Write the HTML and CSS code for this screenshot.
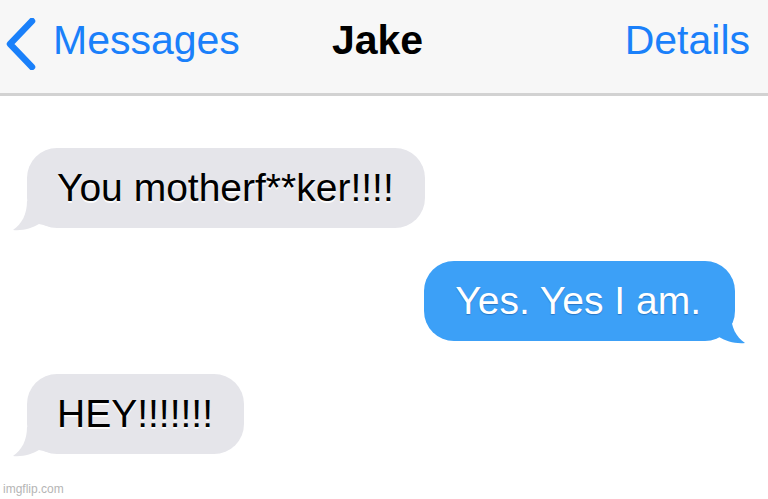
FILE: index.html
```html
<!DOCTYPE html>
<html lang="en">
<head>
  <meta charset="UTF-8">
  <meta name="viewport" content="width=device-width, initial-scale=1.0">
  <title>Jake</title>
  <link rel="stylesheet" href="styles.css">
</head>
<body>

  <!-- Top navigation bar -->
  <div class="nav-bar">
    <div class="nav-back">
      <svg class="chevron" width="30" height="52" viewBox="0 0 30 52">
        <path d="M26 3 L4 26 L26 49" fill="none" stroke="#1a80fa" stroke-width="6.5" stroke-linecap="round" stroke-linejoin="round"/>
      </svg>
      <span>Messages</span>
    </div>
    <div class="nav-title">Jake</div>
    <div class="nav-details">Details</div>
  </div>

  <!-- Conversation -->
  <div class="thread">
    <div class="bubble received">
      You motherf**ker!!!!
      <svg class="tail tail-left" width="40" height="30" viewBox="0 0 40 30">
        <path d="M15 0 C15 13 10 23 1 29 C11 30 20 27 27 23 L40 26 L40 0 Z" fill="#e5e5ea"/>
      </svg>
    </div>

    <div class="bubble sent">
      Yes. Yes I am.
      <svg class="tail tail-right" width="40" height="30" viewBox="0 0 40 30">
        <path d="M25 0 C25 13 30 23 39 29 C29 30 20 27 13 23 L0 26 L0 0 Z" fill="#3ca0f7"/>
      </svg>
    </div>

    <div class="bubble received">
      HEY!!!!!!!
      <svg class="tail tail-left" width="40" height="30" viewBox="0 0 40 30">
        <path d="M15 0 C15 13 10 23 1 29 C11 30 20 27 27 23 L40 26 L40 0 Z" fill="#e5e5ea"/>
      </svg>
    </div>
  </div>

  <div class="watermark">imgflip.com</div>

</body>
</html>
```

FILE: styles.css
```css
/* Page */
body {
  margin: 0;
  width: 768px;
  height: 499px;
  background-color: #fff;
  font-family: "Liberation Sans", Arial, sans-serif;
  position: relative;
  overflow: hidden;
}

/* Navigation bar */
.nav-bar {
  display: flex;
  align-items: flex-start;
  height: 96px;
  box-sizing: border-box;
  padding-top: 17px;
  background-color: #f7f7f7;
  border-bottom: 3px solid #d2d2d2;
  font-size: 41px;
  line-height: 47px;
}

.nav-back {
  display: flex;
  align-items: flex-start;
  color: #1a80fa;
}

.chevron {
  margin: 1px 17px 0 6px;
}

.nav-title {
  margin-left: 92px;
  font-weight: bold;
  color: #000;
}

.nav-details {
  margin-left: auto;
  padding-right: 18px;
  color: #1a80fa;
}

/* Messages */
.thread {
  display: flex;
  flex-direction: column;
  align-items: flex-start;
  gap: 33px;
  padding: 52px 0 0 27px;
}

.bubble {
  position: relative;
  height: 80px;
  line-height: 80px;
  padding: 0 31px 0 30px;
  border-radius: 30px;
  font-size: 39px;
  white-space: nowrap;
}

.bubble.received {
  background-color: #e5e5ea;
  color: #000;
  text-shadow: 0 2px 0 rgba(255, 255, 255, 0.9);
}

.bubble.sent {
  align-self: flex-end;
  margin-right: 33px;
  padding: 0 34px 0 31px;
  background-color: #3ca0f7;
  color: #fff;
  text-shadow: 0 1px 1px rgba(0, 40, 110, 0.35);
}

.tail {
  position: absolute;
  bottom: -3px;
}

.tail-left {
  left: -15px;
}

.tail-right {
  right: -11px;
}

/* Watermark */
.watermark {
  position: absolute;
  left: 3px;
  bottom: 3px;
  font-size: 12px;
  color: #b5b5b5;
}
```
